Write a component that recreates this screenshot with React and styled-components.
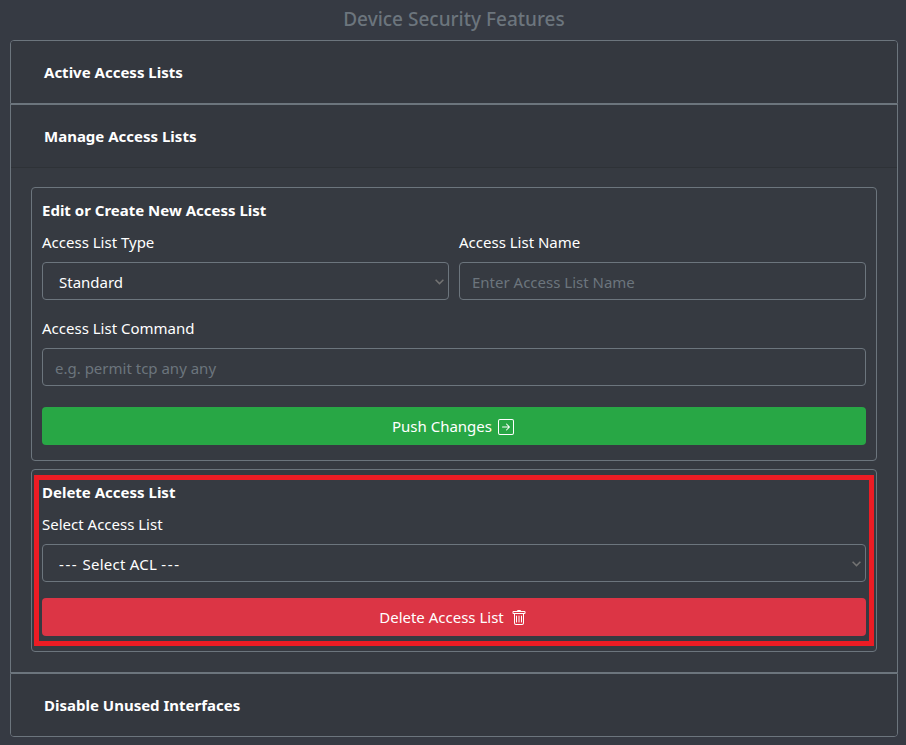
import React from 'react';
import styled, { createGlobalStyle } from 'styled-components';
import { BsArrowRightSquare, BsTrash } from 'react-icons/bs';

const GlobalStyle = createGlobalStyle`
  *, *::before, *::after { box-sizing: border-box; }
  body {
    margin: 0;
    background: #363a43;
    color: #fff;
    font-family: "Segoe UI", "Noto Sans", sans-serif;
    font-size: 15px;
    line-height: 24px;
  }
`;

const Page = styled.main`
  height: 745px;
  padding: 8px 8px 0 10px;
  overflow: hidden;
`;

const Title = styled.h1`
  margin: 0 0 8px;
  height: 24px;
  color: #6c757d;
  font-size: 19px;
  font-weight: 500;
  line-height: 23px;
  text-align: center;
`;

const Accordion = styled.div`
  display: flex;
  flex-direction: column;
`;

const Item = styled.section`
  height: ${(p) => p.$height}px;
  border: 1px solid #6c757d;
  background: #363a41;
  overflow: hidden;
  &:first-child { border-radius: 4px 4px 0 0; }
  &:last-child { border-radius: 0 0 4px 4px; }
`;

const ItemHeader = styled.h2`
  display: flex;
  align-items: center;
  margin: 0;
  height: ${(p) => (p.$open ? 63 : 62)}px;
  padding: 0 33px;
  border-bottom: ${(p) => (p.$open ? '1px solid #2e3237' : '0')};
  background: #34383f;
  font-size: 15px;
  font-weight: 700;
`;

const ItemBody = styled.div`
  display: flex;
  flex-direction: column;
  gap: 8px;
  padding: 19px 20px 0;
`;

const Panel = styled.form`
  position: relative;
  height: ${(p) => p.$height}px;
  padding: 10px;
  border: 1px solid #6c757d;
  border-radius: 4px;
`;

const PanelTitle = styled.h3`
  margin: 0 0 8px;
  font-size: 15px;
  font-weight: 700;
  line-height: 24px;
`;

const Fields = styled.div`
  display: flex;
  gap: 10px;
`;

const Field = styled.div`
  flex: 1;
  margin-bottom: ${(p) => p.$gap ?? 16}px;
`;

const Label = styled.label`
  display: block;
  margin-bottom: 8px;
`;

const controlHeight = '38px';

const Input = styled.input`
  display: block;
  width: 100%;
  height: ${controlHeight};
  padding: 1px 12px 0;
  border: 1px solid #6c757d;
  border-radius: 4px;
  outline: 0;
  background: transparent;
  color: #fff;
  font: inherit;
  &::placeholder { color: #6c757d; opacity: 1; }
`;

const SelectBox = styled.div`
  display: flex;
  align-items: center;
  justify-content: space-between;
  height: ${controlHeight};
  padding: 2px 4px 0 16px;
  border: 1px solid #6c757d;
  border-radius: 4px;
`;

const Dashes = styled.span`
  letter-spacing: 1.6px;
`;

const AclOption = styled.span`
  letter-spacing: 0.25px;
`;

const Button = styled.button`
  display: flex;
  align-items: center;
  justify-content: center;
  gap: ${(p) => (p.$danger ? 7 : 6)}px;
  width: 100%;
  height: 38px;
  padding: 0 2px 0 0;
  border: 0;
  border-radius: 4px;
  background: ${(p) => (p.$danger ? '#dc3545' : '#28a745')};
  color: #fff;
  font: inherit;
  svg { display: block; width: 16px; height: 16px; margin-top: 2px; }
`;

const Highlight = styled.div`
  position: absolute;
  inset: 5px 2px 5px 2px;
  border: 5px solid #ed1c24;
  pointer-events: none;
`;

const Chevron = () => (
  <svg width="9" height="6" viewBox="0 0 9 6" fill="none" stroke="#737373" strokeWidth="1.5">
    <path d="M.6.7 4.5 4.6 8.4.7" />
  </svg>
);

export default function App() {
  return (
    <>
      <GlobalStyle />
      <Page>
        <Title>Device Security Features</Title>
        <Accordion>
          <Item $height={64}>
            <ItemHeader>Active Access Lists</ItemHeader>
          </Item>
          <Item $height={569}>
            <ItemHeader $open>Manage Access Lists</ItemHeader>
            <ItemBody>
              <Panel $height={274}>
                <PanelTitle>Edit or Create New Access List</PanelTitle>
                <Fields>
                  <Field>
                    <Label>Access List Type</Label>
                    <SelectBox><span>Standard</span><Chevron /></SelectBox>
                  </Field>
                  <Field>
                    <Label htmlFor="name">Access List Name</Label>
                    <Input id="name" placeholder="Enter Access List Name" />
                  </Field>
                </Fields>
                <Field $gap={21}>
                  <Label htmlFor="command">Access List Command</Label>
                  <Input id="command" placeholder="e.g. permit tcp any any" />
                </Field>
                <Button type="button">
                  <span>Push Changes</span><BsArrowRightSquare />
                </Button>
              </Panel>
              <Panel $height={183}>
                <PanelTitle>Delete Access List</PanelTitle>
                <Field>
                  <Label>Select Access List</Label>
                  <SelectBox>
                    <AclOption><Dashes>---</Dashes> Select ACL <Dashes>---</Dashes></AclOption>
                    <Chevron />
                  </SelectBox>
                </Field>
                <Button type="button" $danger>
                  <span>Delete Access List</span><BsTrash />
                </Button>
                <Highlight />
              </Panel>
            </ItemBody>
          </Item>
          <Item $height={64}>
            <ItemHeader>Disable Unused Interfaces</ItemHeader>
          </Item>
        </Accordion>
      </Page>
    </>
  );
}
